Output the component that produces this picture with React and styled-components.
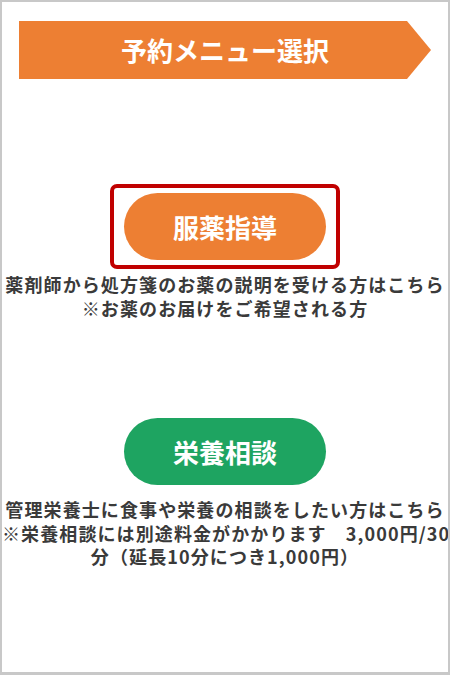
import React from 'react';
import styled, { createGlobalStyle } from 'styled-components';

const GlobalStyle = createGlobalStyle`
	html, body {
		margin: 0;
		padding: 0;
		background: #ffffff;
	}
	body {
		font-family: "Noto Sans CJK JP", "Noto Sans", sans-serif;
	}
`;

const menus = [
	{
		key: 'medication',
		label: '服薬指導',
		color: '#ed7f33',
		selected: true,
		lines: [
			'薬剤師から処方箋のお薬の説明を受ける方はこちら',
			'※お薬のお届けをご希望される方',
		],
	},
	{
		key: 'nutrition',
		label: '栄養相談',
		color: '#1ea461',
		selected: false,
		lines: [
			'管理栄養士に食事や栄養の相談をしたい方はこちら',
			'※栄養相談には別途料金がかかります　3,000円/30',
			'分（延長10分につき1,000円）',
		],
	},
];

export default function App() {
	return (
		<>
			<GlobalStyle />
			<Frame>
				<Banner>予約メニュー選択</Banner>
				{menus.map((menu, i) => (
					<MenuBlock key={menu.key} first={i === 0}>
						<Highlight selected={menu.selected}>
							<PillButton type="button" color={menu.color}>
								{menu.label}
							</PillButton>
						</Highlight>
						<Description>
							{menu.lines.map((line) => (
								<Line key={line}>{line}</Line>
							))}
						</Description>
					</MenuBlock>
				))}
			</Frame>
		</>
	);
}

const Frame = styled.div`
	box-sizing: border-box;
	width: 450px;
	height: 675px;
	border: 2px solid #c8c8c8;
	border-bottom-width: 3px;
	padding-top: 19px;
	display: flex;
	flex-direction: column;
	align-items: center;
	overflow: hidden;
`;

const Banner = styled.h1`
	box-sizing: border-box;
	margin: 0;
	width: 412px;
	height: 58px;
	background: #ed7f33;
	clip-path: polygon(0 0, calc(100% - 24px) 0, 100% 50%, calc(100% - 24px) 100%, 0 100%);
	display: flex;
	align-items: center;
	justify-content: center;
	color: #ffffff;
	font-size: 26px;
	font-weight: bold;
	line-height: 1;
`;

const MenuBlock = styled.section`
	width: 100%;
	display: flex;
	flex-direction: column;
	align-items: center;
	margin-top: ${(p) => (p.first ? '105px' : '98px')};
`;

const Highlight = styled.div`
	box-sizing: border-box;
	padding: ${(p) => (p.selected ? '5px 10px' : '0')};
	border: ${(p) => (p.selected ? '4px solid #c00000' : 'none')};
	border-radius: 7px;
	margin-bottom: ${(p) => (p.selected ? '4px' : '13px')};
`;

const PillButton = styled.button`
	width: 202px;
	height: 67px;
	border: none;
	border-radius: 34px;
	background: ${(p) => p.color};
	color: #ffffff;
	font-family: "Noto Sans CJK JP", "Noto Sans", sans-serif;
	font-size: 26px;
	font-weight: bold;
	padding: 0;
	cursor: pointer;
`;

const Description = styled.div`
	width: 100%;
	color: #3a3a3a;
	font-size: 18px;
	font-weight: bold;
	letter-spacing: 1.1px;
	line-height: 23.5px;
	text-align: center;
`;

const Line = styled.div`
	white-space: nowrap;
`;
